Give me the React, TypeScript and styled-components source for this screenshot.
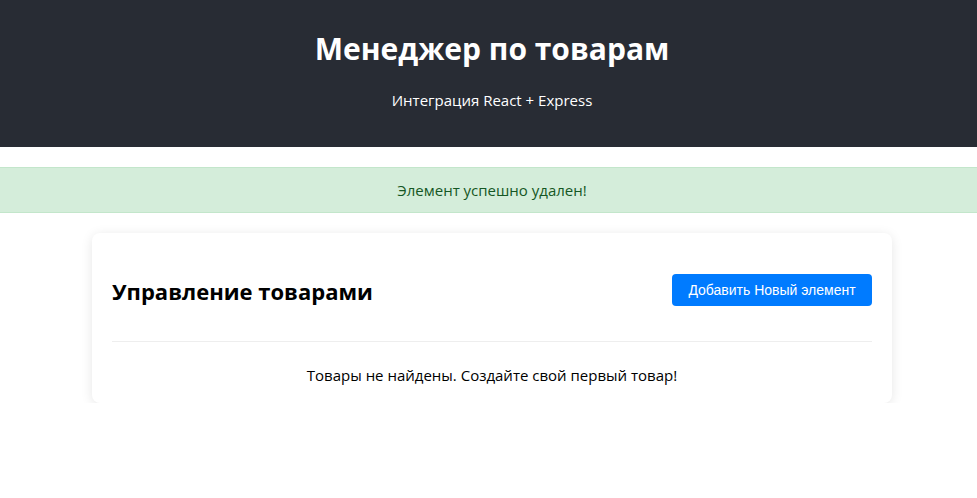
import React from "react";
import styled, { createGlobalStyle } from "styled-components";

const Global = createGlobalStyle`
  html, body {
    overflow-x: hidden;
  }
  body {
    margin: 0;
    font-family: "Open Sans", "Noto Sans", sans-serif;
    background: #fff;
    color: #000;
  }
`;

const Page = styled.div`
  width: 984px;
`;

const Header = styled.header`
  background: #282c34;
  color: #fff;
  height: 147px;
  box-sizing: border-box;
  padding-top: 27px;
  text-align: center;
`;

const Title = styled.h1`
  margin: 0;
  font-size: 30px;
  line-height: 44px;
  font-weight: 700;
`;

const Subtitle = styled.p`
  margin: 19px 0 0;
  font-size: 15px;
  line-height: 20px;
`;

const Alert = styled.div`
  margin-top: 20px;
  height: 46px;
  box-sizing: border-box;
  background: #d4edda;
  border-top: 1px solid #c3e6cb;
  border-bottom: 1px solid #c3e6cb;
  color: #155724;
  display: flex;
  align-items: center;
  justify-content: center;
  font-size: 15px;
`;

const Card = styled.section`
  width: 800px;
  box-sizing: border-box;
  margin: 20px auto 0;
  background: #fff;
  border-radius: 8px;
  box-shadow: 0 2px 12px rgba(0, 0, 0, 0.1);
  padding: 20px 20px 16px;
`;

const CardHeader = styled.div`
  display: flex;
  justify-content: space-between;
  align-items: center;
  padding: 20px 0 35px;
  border-bottom: 1px solid #eee;
`;

const CardTitle = styled.h2`
  margin: 3px 0 0;
  font-size: 22px;
  line-height: 30px;
  font-weight: 700;
`;

const Button = styled.button`
  background: #007bff;
  color: #fff;
  border: none;
  border-radius: 4px;
  height: 32px;
  width: 200px;
  padding: 0;
  font-family: "Liberation Sans", Arial, sans-serif;
  font-size: 14px;
  cursor: pointer;
`;

const Empty = styled.p`
  margin: 21px 0 0;
  text-align: center;
  font-size: 15px;
  line-height: 24px;
`;

export default function App() {
  return (
    <Page>
      <Global />
      <Header>
        <Title>Менеджер по товарам</Title>
        <Subtitle>Интеграция React + Express</Subtitle>
      </Header>
      <Alert>Элемент успешно удален!</Alert>
      <Card>
        <CardHeader>
          <CardTitle>Управление товарами</CardTitle>
          <Button>Добавить Новый элемент</Button>
        </CardHeader>
        <Empty>Товары не найдены. Создайте свой первый товар!</Empty>
      </Card>
    </Page>
  );
}
